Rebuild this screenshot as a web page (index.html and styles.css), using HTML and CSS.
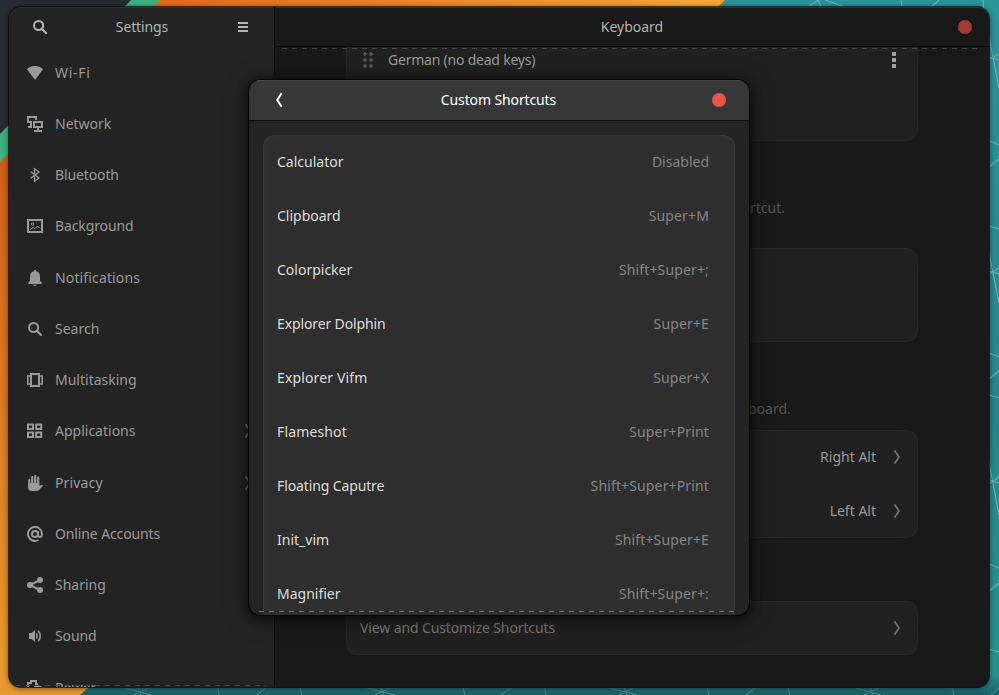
FILE: index.html
```
<!DOCTYPE html>
<html lang="en">
<head>
<meta charset="utf-8">
<title>Settings</title>
<link rel="stylesheet" href="styles.css">
</head>
<body>
<svg class="wallpaper" width="999" height="695" viewBox="0 0 999 695">
  <defs>
    <linearGradient id="sun" gradientUnits="userSpaceOnUse" x1="0" y1="160" x2="0" y2="695"><stop offset="0" stop-color="#cf6017"/><stop offset="1" stop-color="#ea9a30"/></linearGradient>
    <linearGradient id="sunTop" x1="0" y1="0" x2="1" y2="0"><stop offset="0" stop-color="#e56a1a"/><stop offset="1" stop-color="#f5a838"/></linearGradient>
    <linearGradient id="sea" x1="0" y1="0" x2="0" y2="1"><stop offset="0" stop-color="#2b959c"/><stop offset=".6" stop-color="#268888"/><stop offset=".97" stop-color="#24958c"/><stop offset="1" stop-color="#196066"/></linearGradient>
  </defs>
  <rect width="999" height="695" fill="url(#sea)"/>
  <path d="M0 0H725L88 688L80 695H0Z" fill="url(#sun)"/>
  <path d="M155 0H725L701 24H155Z" fill="url(#sunTop)"/>
  <path d="M0 0H160L0 162Z" fill="#3eb180"/>
  <path d="M0 0H131L0 134Z" fill="#252c32"/>
  <g fill="none" stroke="#6db6b8" stroke-width="1.1">
    <path d="M808 7L818 0L821 7M825 0L845 7M901 0L902 7M931 7L939 0M983 0L984 10"/>
    <path d="M989 37L999 88M989 59L999 54M989 57L999 60M989 141L999 145M989 167L999 159M989 226L999 229"/>
    <path d="M989 395L999 398M989 462L999 515M989 484L999 477M989 480L999 483M989 564L999 568M989 591L999 583M989 649L999 652"/>
    <path d="M989 253L999 303M989 274L999 268M989 271L999 274M989 353L999 357M989 379L999 371"/>
  </g>
  <g fill="none" stroke="#4a8a8f" stroke-width="1.1">
    <path d="M125 688L151 695M148 688L134 695M138 688L141 695M218 688L219 695M266 688L257 695M300 688L302 695M367 688L395 695M390 688L375 695M381 688L384 695M463 688L465 695M510 688L501 695M545 688L546 695M610 688L637 695M633 688L619 695M624 688L627 695M707 688L709 695M755 688L746 695M788 688L790 695M856 688L881 695M879 688L864 695M870 688L873 695M952 688L954 695M999 688L991 695"/>
  </g>
</svg>

<svg class="symbols" width="0" height="0">
  <symbol id="search" viewBox="0 0 16 16"><circle cx="6.6" cy="6.5" r="4.6" fill="none" stroke="currentColor" stroke-width="2"/><path d="M9.7 9.7L14 14" stroke="currentColor" stroke-width="2.3" stroke-linecap="round"/></symbol>
  <symbol id="wifi" viewBox="0 0 16 16"><path d="M8 15L0 4.3Q3.2 1 8 1T16 4.3Z" fill="currentColor"/></symbol>
  <symbol id="network" viewBox="0 0 16 16"><path d="M9 4V1H1V6H4V11H1M7 6H15V11H7ZM11 11V15M7 15H15" fill="none" stroke="currentColor" stroke-width="2"/></symbol>
  <symbol id="bluetooth" viewBox="0 0 16 16"><path d="M3.5 4.5L12 11L7.5 14.3V1.7L12 5L3.5 11.5" fill="none" stroke="currentColor" stroke-width="1.3"/></symbol>
  <symbol id="background" viewBox="0 0 16 16"><path d="M1 2H15V14H1Z" fill="none" stroke="currentColor" stroke-width="2"/><circle cx="5.5" cy="6" r="1.2" fill="none" stroke="currentColor"/><path d="M3 11.5L6 9.5L8 10.5L10.5 8L13 10.5" fill="none" stroke="currentColor"/></symbol>
  <symbol id="bell" viewBox="0 0 16 16"><path d="M8 0C8.8 0 9 .6 9.2 1.2C12 2 13 4 13 7V11L14.7 12.5V14H1.3V12.5L3 11V7C3 4 4 2 6.8 1.2C7 .6 7.2 0 8 0ZM6 14.7H10Q9.5 16 8 16T6 14.7Z" fill="currentColor"/></symbol>
  <symbol id="multitask" viewBox="0 0 16 16"><path d="M4 2H12V14H4Z" fill="none" stroke="currentColor" stroke-width="2"/><path d="M3.5 4H.8V12H3.5M12.5 4H15.2V12H12.5" fill="none" stroke="currentColor" stroke-width="1.6"/></symbol>
  <symbol id="apps" viewBox="0 0 16 16"><path d="M1 1.5H6V6H1ZM9.2 1.5H14.2V6H9.2ZM1 9.5H6V14H1ZM9.2 9.5H14.2V14H9.2Z" fill="none" stroke="currentColor" stroke-width="2"/></symbol>
  <symbol id="hand" viewBox="0 0 16 16"><path d="M2.2 5V10M5.2 2V9M8.2 1V9M11.2 2.5V10" fill="none" stroke="currentColor" stroke-width="2.1" stroke-linecap="round"/><path d="M1.1 8H12.2V10.7L14.5 10Q16 9.7 16 10.8L12 15Q11 16 9.5 16H4.5Q1.1 16 1.1 12Z" fill="currentColor"/></symbol>
  <symbol id="at" viewBox="0 0 16 16"><circle cx="8" cy="8" r="3" fill="none" stroke="currentColor" stroke-width="2"/><path d="M11 5V9Q11 11 13 11T15 8A7 7 0 1 0 11.5 14" fill="none" stroke="currentColor" stroke-width="1.9"/></symbol>
  <symbol id="share" viewBox="0 0 16 16"><path d="M13 3L3 8L13 13" fill="none" stroke="currentColor" stroke-width="2"/><g fill="currentColor"><circle cx="13" cy="3" r="3"/><circle cx="3" cy="8" r="3"/><circle cx="13" cy="13" r="3"/></g></symbol>
  <symbol id="sound" viewBox="0 0 16 16"><path d="M2 5H4.5L8 2V14L4.5 11H2Z" fill="currentColor"/><path d="M9.3 5.3Q10.8 8 9.3 10.7M11.3 2.7Q15.2 8 11.3 13.3" fill="none" stroke="currentColor" stroke-width="1.6"/></symbol>
  <symbol id="power" viewBox="0 0 16 16"><path d="M5 8H1V3H4V1H9V4H10V6M7 7H13L11 11" fill="none" stroke="currentColor" stroke-width="2"/></symbol>
  <symbol id="next" viewBox="0 0 8 16"><path d="M1.5 1.3L6 8L1.5 14.7" fill="none" stroke="currentColor" stroke-width="1.6"/></symbol>
  <symbol id="back" viewBox="0 0 8 16"><path d="M6.6 1.3L2.3 8L6.6 14.7" fill="none" stroke="currentColor" stroke-width="2"/></symbol>
</svg>

<div class="window">
  <aside class="sidebar">
    <header class="side-head">
      <svg class="icon"><use href="#search"/></svg>
      <h1 class="tight">Settings</h1>
      <span class="burger"></span>
    </header>
    <nav class="nav">
      <a><svg class="icon"><use href="#wifi"/></svg><span class="wide">Wi-Fi</span></a>
      <a><svg class="icon"><use href="#network"/></svg><span>Network</span></a>
      <a><svg class="icon"><use href="#bluetooth"/></svg><span class="tight">Bluetooth</span></a>
      <a><svg class="icon"><use href="#background"/></svg><span class="tight">Background</span></a>
      <a><svg class="icon"><use href="#bell"/></svg><span class="loose">Notifications</span></a>
      <a><svg class="icon"><use href="#search"/></svg><span>Search</span></a>
      <a><svg class="icon"><use href="#multitask"/></svg><span>Multitasking</span></a>
      <a><svg class="icon"><use href="#apps"/></svg><span>Applications</span><svg class="chevron"><use href="#next"/></svg></a>
      <a><svg class="icon"><use href="#hand"/></svg><span class="loose">Privacy</span><svg class="chevron"><use href="#next"/></svg></a>
      <a><svg class="icon"><use href="#at"/></svg><span class="tight">Online Accounts</span></a>
      <a><svg class="icon"><use href="#share"/></svg><span>Sharing</span></a>
      <a><svg class="icon"><use href="#sound"/></svg><span class="tight">Sound</span></a>
      <a><svg class="icon"><use href="#power"/></svg><span>Power</span></a>
    </nav>
    <div class="dashes side-dashes"></div>
  </aside>
  <main class="main">
    <header class="main-head"><h1>Keyboard</h1><span class="close"></span></header>
    <div class="content">
      <section class="card sources">
        <div class="row"><span class="grip"></span><span class="source">German (no dead keys)</span><span class="dots"></span></div>
      </section>
      <p class="hint first">rtcut.</p>
      <section class="card switching"></section>
      <p class="hint second">board.</p>
      <section class="card keys">
        <div class="row end"><span>Right Alt</span><svg class="chevron"><use href="#next"/></svg></div>
        <div class="row end"><span>Left Alt</span><svg class="chevron"><use href="#next"/></svg></div>
      </section>
      <section class="card view">
        <div class="row"><span class="tight">View and Customize Shortcuts</span><svg class="chevron"><use href="#next"/></svg></div>
      </section>
    </div>
    <div class="dashes main-dashes"></div>
  </main>
</div>

<div class="dialog">
  <header class="dialog-head"><svg class="back"><use href="#back"/></svg><h2 class="tight">Custom Shortcuts</h2><span class="close"></span></header>
  <div class="dialog-body">
    <ul class="shortcuts">
      <li><span>Calculator</span><kbd>Disabled</kbd></li>
      <li><span>Clipboard</span><kbd class="loose">Super+M</kbd></li>
      <li><span>Colorpicker</span><kbd class="loose">Shift+Super+;</kbd></li>
      <li><span class="tight">Explorer Dolphin</span><kbd class="loose">Super+E</kbd></li>
      <li><span class="loose">Explorer Vifm</span><kbd class="loose">Super+X</kbd></li>
      <li><span class="loose">Flameshot</span><kbd class="loose">Super+Print</kbd></li>
      <li><span class="tight">Floating Caputre</span><kbd class="loose">Shift+Super+Print</kbd></li>
      <li><span>Init_vim</span><kbd class="loose">Shift+Super+E</kbd></li>
      <li><span>Magnifier</span><kbd class="loose">Shift+Super+:</kbd></li>
    </ul>
  </div>
  <div class="dashes dialog-dashes"></div>
</div>
</body>
</html>
```
FILE: styles.css
```
* { box-sizing: border-box; margin: 0; padding: 0; }
body {
  position: relative;
  width: 999px;
  height: 695px;
  overflow: hidden;
  font: 14px/20px "Noto Sans", sans-serif;
  color: #9a9a9a;
}
h1, h2, kbd { font: inherit; }
.tight { letter-spacing: -.12px; }
.loose { letter-spacing: .14px; }
.wide { letter-spacing: .7px; }
.wallpaper, .symbols { position: absolute; left: 0; top: 0; }

.window {
  position: absolute;
  left: 9px;
  top: 7px;
  width: 980px;
  height: 680px;
  display: flex;
  overflow: hidden;
  border-radius: 12px;
  background: #191919;
  box-shadow: inset 0 1px #303030, 0 0 0 1px rgba(0,0,0,.65), 0 1px 6px rgba(0,0,0,.6);
}
.sidebar {
  position: relative;
  width: 266px;
  flex: none;
  background: #232323;
  border-right: 1px solid #090909;
  box-shadow: inset 0 1px #303030;
}
.side-head {
  height: 40px;
  display: flex;
  align-items: center;
  justify-content: space-between;
  padding: 0 26px 0 23px;
  color: #b3b3b3;
}
.side-head h1 { margin-right: 2px; }
.burger {
  width: 10px;
  height: 10px;
  background: linear-gradient(#b3b3b3 2px, transparent 2px 4px, #b3b3b3 4px 6px, transparent 6px 8px, #b3b3b3 8px);
}
.icon { width: 16px; height: 16px; flex: none; display: block; }
.chevron { width: 8px; height: 16px; flex: none; color: #777; }
.nav a {
  height: 51.25px;
  display: flex;
  align-items: center;
  gap: 12px;
  padding: 0 22px 0 18px;
}
.nav .chevron { margin-left: auto; }

.main { position: relative; flex: 1; min-width: 0; }
.main-head {
  height: 40px;
  display: flex;
  align-items: center;
  justify-content: center;
  border-bottom: 1px solid #070707;
  color: #b3b3b3;
}
.close { width: 14px; height: 14px; border-radius: 50%; background: #a43a34; }
.main-head h1 { margin-left: auto; padding-left: 31px; }
.main-head .close { margin-left: auto; margin-right: 17px; }
.content { width: 572px; margin-left: 71px; }
.card {
  border-radius: 0 0 12px 12px;
  background: #202020;
  box-shadow: inset 0 0 0 1px #272727, inset 0 0 12px rgba(255,255,255,.018);
}
.card:not(.sources) { border-radius: 12px; }
.row { height: 54px; display: flex; align-items: center; padding: 0 17px 0 14px; }
.sources { height: 94px; }
.sources .row { height: 26px; padding-left: 16px; }
.grip {
  width: 12px;
  height: 18px;
  background: radial-gradient(circle, #555 1.5px, transparent 2px) 0 0 / 6px 6px;
}
.source { margin-left: 14px; letter-spacing: -.22px; }
.dots {
  width: 4px;
  height: 16px;
  margin: 0 5px 0 auto;
  background: linear-gradient(#a0a0a0 4px, transparent 4px 6px, #a0a0a0 6px 10px, transparent 10px 12px, #a0a0a0 12px);
}
.hint { padding-left: 404px; color: #555; }
.hint.first { margin-top: 57px; }
.switching { height: 94px; margin-top: 30px; }
.hint.second { margin-top: 57px; padding-left: 402px; }
.keys { margin-top: 11px; }
.view { margin-top: 63px; color: #777; }
.end { justify-content: flex-end; gap: 17px; }
.view .chevron { margin-left: auto; }

.dialog {
  position: absolute;
  left: 249px;
  top: 80px;
  width: 500px;
  height: 535px;
  overflow: hidden;
  border-radius: 12px;
  background: #242424;
  box-shadow: 0 0 0 1px rgba(0,0,0,.85), 0 2px 10px 2px rgba(0,0,0,.5), 0 3px 26px rgba(0,0,0,.35);
}
.dialog-head {
  height: 41px;
  display: flex;
  align-items: center;
  justify-content: space-between;
  padding: 0 23px 0 26px;
  background: #373737;
  border-bottom: 1px solid #0c0c0c;
  box-shadow: inset 0 1px #494949;
  color: #fff;
}
.dialog-head .close { background: #eb524b; }
.back { width: 8px; height: 16px; }
.dialog-head h2 { padding-left: 2px; }
.dialog-body { padding: 14px; }
.shortcuts {
  list-style: none;
  border-radius: 12px;
  background: #2e2e2e;
  box-shadow: inset 0 0 0 1px #3a3a3a, inset 0 0 12px rgba(255,255,255,.025);
}
.shortcuts li {
  height: 54px;
  display: flex;
  align-items: center;
  justify-content: space-between;
  padding: 0 26px 0 14px;
  color: #dedede;
}
.shortcuts kbd { color: #868686; }
.dashes {
  position: absolute;
  height: 1px;
  background: repeating-linear-gradient(90deg, #4a4a4a 0 5px, transparent 5px 10px);
}
.side-dashes { left: 6px; right: 8px; bottom: 1px; }
.main-dashes { left: 7px; right: 7px; top: 41px; }
.dialog-dashes { left: 10px; right: 10px; bottom: 3px; background: repeating-linear-gradient(90deg, #777 0 5px, #242424 5px 10px); }
```
